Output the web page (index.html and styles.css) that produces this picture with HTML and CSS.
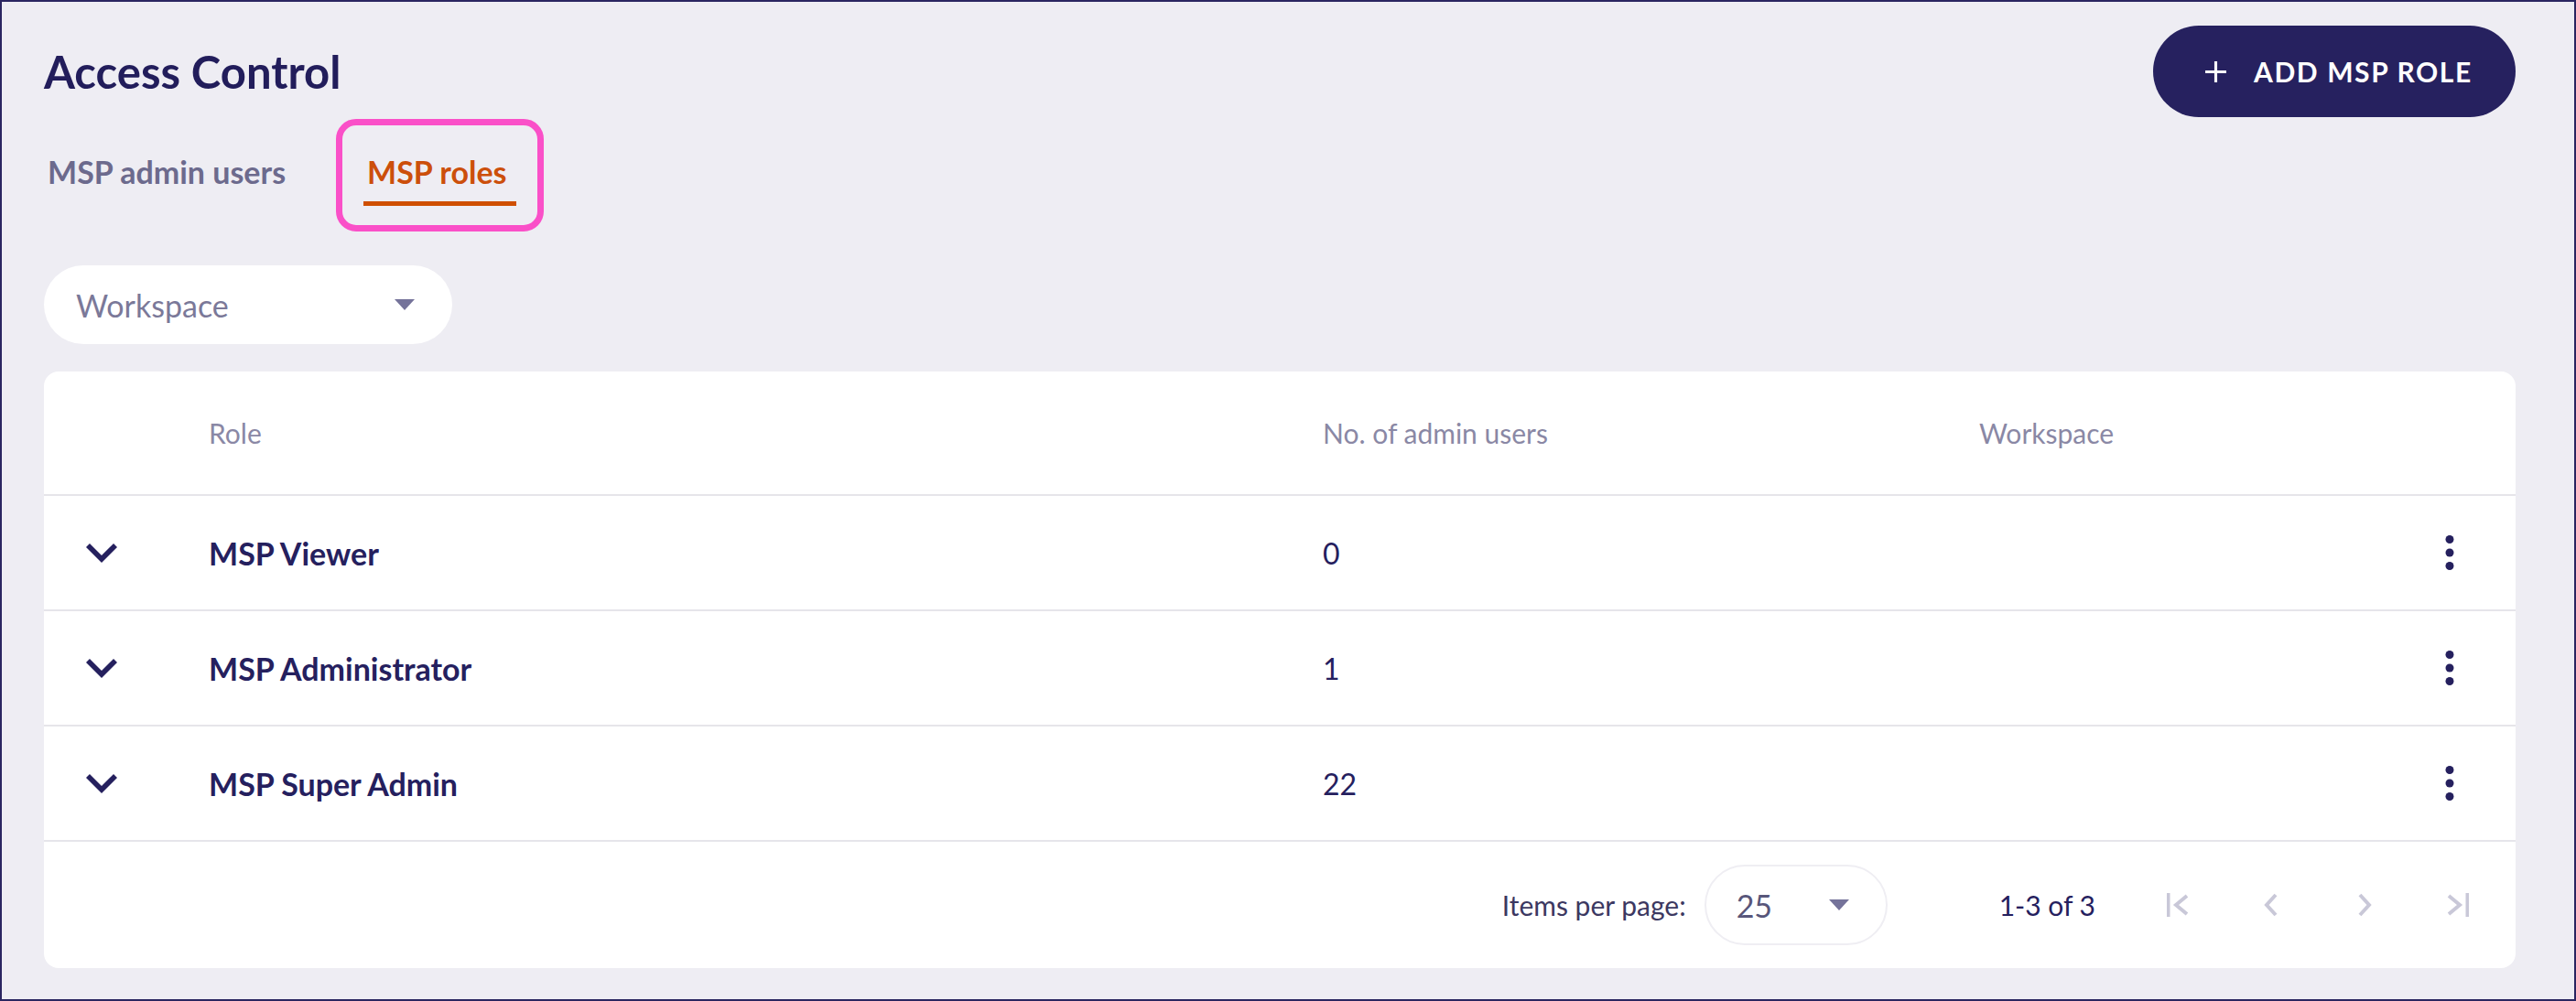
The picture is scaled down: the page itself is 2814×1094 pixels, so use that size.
FILE: index.html
```html
<!DOCTYPE html>
<html lang="en">
  <head>
    <meta charset="UTF-8" />
    <title>Access Control</title>
    <link rel="stylesheet" href="styles.css">
  </head>
  <body>
    <main class="page">
      <header class="page-head">
        <h1 class="page-title">Access Control</h1>
        <button class="add-btn">
          <svg class="add-icon" viewBox="0 0 24 24" width="25" height="25">
            <path d="M12 1v22M1 12h22" stroke="#fff" stroke-width="3" fill="none" />
          </svg>
          <span>ADD MSP ROLE</span>
        </button>
      </header>

      <nav class="tabs">
        <a class="tab">MSP admin users</a>
        <a class="tab tab-active">MSP roles</a>
      </nav>

      <div class="filter">
        <span>Workspace</span>
        <svg viewBox="0 0 22 12" width="22" height="12"><path d="M0 0h22L11 12z" fill="#75739a" /></svg>
      </div>

      <section class="card">
        <div class="row row-head">
          <div></div>
          <div>Role</div>
          <div>No. of admin users</div>
          <div>Workspace</div>
          <div></div>
        </div>

        <div class="row">
          <div class="expand">
            <svg viewBox="6 8.59 12 7.41" width="34" height="21"><path d="M16.59 8.59L12 13.17 7.41 8.59 6 10l6 6 6-6z" fill="#25205e" /></svg>
          </div>
          <div class="role-name">MSP Viewer</div>
          <div>0</div>
          <div></div>
          <div class="more">
            <svg viewBox="0 0 10 38" width="10" height="38"><circle cx="5" cy="4.5" r="4.5" /><circle cx="5" cy="19" r="4.5" /><circle cx="5" cy="33.5" r="4.5" /></svg>
          </div>
        </div>

        <div class="row">
          <div class="expand">
            <svg viewBox="6 8.59 12 7.41" width="34" height="21"><path d="M16.59 8.59L12 13.17 7.41 8.59 6 10l6 6 6-6z" fill="#25205e" /></svg>
          </div>
          <div class="role-name">MSP Administrator</div>
          <div>1</div>
          <div></div>
          <div class="more">
            <svg viewBox="0 0 10 38" width="10" height="38"><circle cx="5" cy="4.5" r="4.5" /><circle cx="5" cy="19" r="4.5" /><circle cx="5" cy="33.5" r="4.5" /></svg>
          </div>
        </div>

        <div class="row">
          <div class="expand">
            <svg viewBox="6 8.59 12 7.41" width="34" height="21"><path d="M16.59 8.59L12 13.17 7.41 8.59 6 10l6 6 6-6z" fill="#25205e" /></svg>
          </div>
          <div class="role-name">MSP Super Admin</div>
          <div>22</div>
          <div></div>
          <div class="more">
            <svg viewBox="0 0 10 38" width="10" height="38"><circle cx="5" cy="4.5" r="4.5" /><circle cx="5" cy="19" r="4.5" /><circle cx="5" cy="33.5" r="4.5" /></svg>
          </div>
        </div>

        <footer class="pager">
          <span class="pager-label">Items per page:</span>
          <div class="page-size">
            <span>25</span>
            <svg viewBox="0 0 22 12" width="22" height="12"><path d="M0 0h22L11 12z" fill="#75739a" /></svg>
          </div>
          <span class="pager-range">1-3 of 3</span>
          <div class="pager-nav">
            <button class="pager-btn">
              <svg viewBox="0 0 28 28" width="28" height="28"><rect x="2" y="1" width="3.5" height="26" /><path d="M24 4L12 14l12 10" /></svg>
            </button>
            <button class="pager-btn">
              <svg viewBox="0 0 28 28" width="28" height="28"><path d="M19 3L9 14l10 11" /></svg>
            </button>
            <button class="pager-btn">
              <svg viewBox="0 0 28 28" width="28" height="28"><path d="M9 3l10 11L9 25" /></svg>
            </button>
            <button class="pager-btn">
              <svg viewBox="0 0 28 28" width="28" height="28"><path d="M4 4l12 10L4 24" /><rect x="22.5" y="1" width="3.5" height="26" /></svg>
            </button>
          </div>
        </footer>
      </section>
    </main>
  </body>
</html>
```

FILE: styles.css
```css
/* base */
html,
body {
  margin: 0;
  height: 100%;
}

body {
  background: #eeedf3;
  font-family: "Lato", "Liberation Sans", sans-serif;
  color: #25205e;
}

.page {
  box-sizing: border-box;
  height: 100vh;
  border: 2px solid #2a2560;
  padding: 26px 64px 0 46px;
}

/* header */
.page-head {
  display: flex;
  justify-content: space-between;
  align-items: center;
  height: 100px;
}

.page-title {
  margin: 0;
  font-size: 49px;
  line-height: 60px;
  font-weight: 700;
  color: #221d5b;
}

.add-btn {
  display: flex;
  align-items: center;
  gap: 29px;
  box-sizing: border-box;
  width: 396px;
  height: 100px;
  padding: 0 0 0 56px;
  border: none;
  border-radius: 50px;
  background: #26215f;
  color: #fff;
  font-family: inherit;
  font-size: 30px;
  font-weight: 700;
  letter-spacing: 1.6px;
}

/* tabs */
.tabs {
  display: flex;
  gap: 81px;
  margin-top: 40px;
}

.tab {
  padding: 0 4px 12px;
  border-bottom: 5px solid transparent;
  font-size: 34px;
  line-height: 40px;
  font-weight: 700;
  color: #6c6a8d;
}

.tab-active {
  position: relative;
  padding-right: 10px;
  color: #cc4f0b;
  border-bottom-color: #cf4f00;
}

/* highlight frame over the active tab */
.tab-active::after {
  content: "";
  position: absolute;
  left: -30px;
  right: -30px;
  top: -38px;
  bottom: -33px;
  border: 7px solid #fa50c8;
  border-radius: 22px;
}

/* workspace filter */
.filter {
  display: flex;
  align-items: center;
  justify-content: space-between;
  box-sizing: border-box;
  width: 446px;
  height: 86px;
  margin-top: 65px;
  padding: 0 41px 0 35px;
  border-radius: 43px;
  background: #fff;
  font-size: 34px;
  color: #7b7999;
}

/* table card */
.card {
  margin-top: 30px;
  background: #fff;
  border-radius: 16px;
}

.row {
  display: grid;
  grid-template-columns: 180px 1217px 717px 1fr 48px;
  align-items: center;
  height: 126px;
  padding-right: 48px;
  box-sizing: border-box;
  border-bottom: 2px solid #e6e5ea;
  font-size: 32px;
}

.row-head {
  height: 136px;
  font-size: 30px;
  color: #8a88a5;
}

.expand {
  display: flex;
  padding-left: 46px;
}

.role-name {
  font-size: 34px;
  font-weight: 700;
}

.more {
  display: flex;
  justify-content: center;
}

.more svg {
  fill: #25205e;
}

/* pagination */
.pager {
  display: flex;
  align-items: center;
  justify-content: flex-end;
  height: 138px;
  padding-right: 12px;
  font-size: 30px;
}

.pager-label {
  color: #3c3861;
}

.page-size {
  display: flex;
  align-items: center;
  justify-content: space-between;
  box-sizing: border-box;
  width: 200px;
  height: 88px;
  margin-left: 20px;
  padding: 0 40px 0 33px;
  border: 2px solid #efeef3;
  border-radius: 44px;
  font-size: 34px;
  color: #58567a;
}

.pager-range {
  margin-left: 122px;
}

.pager-nav {
  display: flex;
  margin-left: 39px;
}

.pager-btn {
  display: flex;
  justify-content: center;
  width: 102px;
  padding: 0;
  border: none;
  background: none;
}

.pager-btn svg {
  fill: #c9c8d8;
  stroke: #c9c8d8;
}

.pager-btn svg path {
  fill: none;
  stroke-width: 4;
}

.pager-btn svg rect {
  stroke: none;
}
```
